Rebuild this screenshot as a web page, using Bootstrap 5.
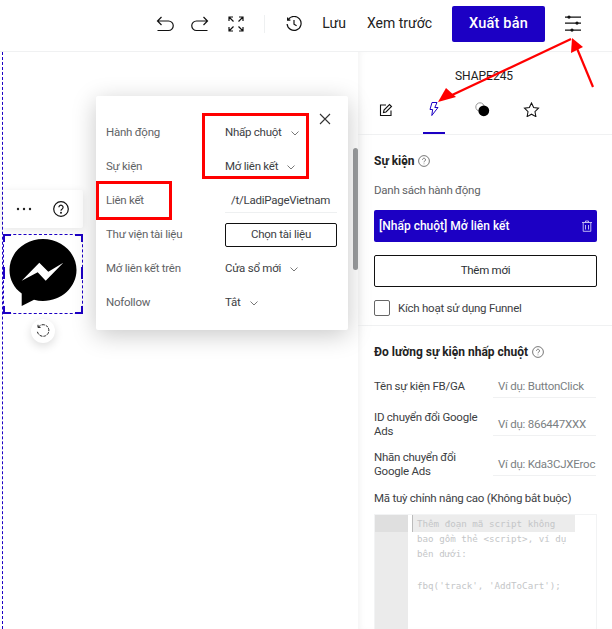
<!DOCTYPE html>
<html lang="en">
<head>
<meta charset="UTF-8">
<title>LadiPage</title>
<link href="https://cdn.jsdelivr.net/npm/bootstrap@5.3.0/dist/css/bootstrap.min.css" rel="stylesheet">
<style>
    html, body { height: 629px; overflow: hidden; }
    body { font-family: Roboto, "Liberation Sans", sans-serif; font-size: 11.5px; letter-spacing: -.25px; color: #3c4043; background: #fff; position: relative; }
    .topbar { height: 52px; border-bottom: 1px solid #f0f1f2; padding: 0 30px 3px 0; letter-spacing: 0; }
    .tool-ic { display: block; color: #111; flex: none; }
    .m-redo { margin-left: 17px; }
    .m-expand { margin-left: 18px; }
    .tool-sep { width: 1px; height: 18px; background: #eef0f1; margin: 0 21px 0 19px; }
    .m-lbl { margin-left: 20px; }
    .m-preview { margin-left: 21px; }
    .tool-txt { font-size: 14px; color: #222; margin-top: -2px; }
    .publish { width: 93px; height: 36px; background: #1c00c4; color: #fff; font-size: 14.5px; font-weight: 500; border-radius: 2px; border: 0; letter-spacing: .2px; margin: 0 19px 0 20px; padding: 0; }
    .workspace { height: 577px; }
    .canvas { width: 358px; position: relative; flex: none; }
    .guide { position: absolute; left: 2px; top: 0; bottom: 0; border-left: 1px dashed #1c00c4; }
    .float-bar { position: absolute; left: 3px; top: 138px; width: 80px; height: 38px; background: #fff; border-radius: 2px; box-shadow: 0 2px 8px rgba(0,0,0,.1); padding-left: 13px; gap: 21px; }
    .selected-shape { position: absolute; left: 3px; top: 182px; width: 80px; height: 80px; border: 1px dashed #1c00c4; }
    .handle { position: absolute; width: 8px; height: 8px; border-color: #1c00c4; border-style: solid; border-width: 0; }
    .h-tl { left: -1px; top: -1px; border-top-width: 2px; border-left-width: 2px; }
    .h-tr { right: -1px; top: -1px; border-top-width: 2px; border-right-width: 2px; }
    .h-bl { left: -1px; bottom: -1px; border-bottom-width: 2px; border-left-width: 2px; }
    .h-br { right: -1px; bottom: -1px; border-bottom-width: 2px; border-right-width: 2px; }
    .h-ml { left: -1px; top: 32px; height: 12px; border-left-width: 2px; }
    .h-mr { right: -1px; top: 32px; height: 12px; border-right-width: 2px; }
    .rotate-btn { position: absolute; left: 31px; top: 267px; width: 24px; height: 24px; border-radius: 50%; background: #fff; box-shadow: 0 3px 10px rgba(0,0,0,.14); }
    .popup { position: absolute; left: 96px; top: 44px; width: 252px; height: 234px; background: #fff; border-radius: 2px; box-shadow: 0 5px 24px rgba(0,0,0,.22); padding: 20px 11px 0 10px; z-index: 3; }
    .popup-row { height: 34px; }
    .popup-lbl { width: 119px; color: #5f6366; flex: none; }
    .popup-val { color: #3c4043; white-space: nowrap; }
    .popup-val svg { margin-left: 9px; }
    .link-val { width: 112px; height: 24px; border-bottom: 1px solid #eef0f1; padding-left: 6px; line-height: 23px; }
    .doc-btn { width: 112px; height: 24px; border: 1px solid #111; border-radius: 2px; background: #fff; font-size: 11.5px; letter-spacing: -.25px; color: #3c4043; padding: 0; }
    .popup-close { position: absolute; right: 17px; top: 17px; }
    .side-scroll { position: absolute; left: 353px; top: 96px; width: 5px; height: 122px; background: #9b9d9f; border-radius: 3px; }
    .panel { width: 254px; flex: none; box-shadow: inset 5px 0 6px -3px rgba(0,0,0,.05); overflow: hidden; }
    .panel-title { font-size: 12px; letter-spacing: 0; color: #222; text-align: center; height: 46px; padding-top: 15px; margin-left: -2px; }
    .panel-tabs { height: 37px; border-bottom: 1px solid #f0f1f2; position: relative; }
    .tab-ic { position: absolute; }
    .t-edit { left: 21px; top: 5px; }
    .t-bolt { left: 71px; top: 4px; }
    .t-style { left: 117px; top: 4px; }
    .t-star { left: 165px; top: 4px; }
    .tab-line { position: absolute; left: 65px; bottom: 0; width: 22px; height: 2px; background: #1c00c4; }
    .sec-top { padding: 18px 15px 0 16px; height: 191px; border-bottom: 1px solid #f0f1f2; }
    .sec-h { font-size: 12px; letter-spacing: 0; font-weight: 700; color: #222; line-height: 16px; }
    .list-lbl { color: #5f6366; line-height: 16px; margin-top: 13px; }
    .action-bar { height: 32px; background: #1c00c4; color: #fff; border-radius: 2px; padding: 0 5px; font-size: 12px; letter-spacing: 0; font-weight: 500; margin-top: 12px; }
    .add-btn { display: block; width: 100%; height: 32px; margin-top: 13px; border: 1px solid #111; border-radius: 2px; background: #fff; color: #2b2f33; font-size: 11.5px; letter-spacing: -.25px; padding: 0; }
    .funnel-row { margin-top: 12px; gap: 8px; }
    .funnel-txt { padding-top: 1px; }
    .funnel-box { width: 16px; height: 16px; border: 1px solid #666; border-radius: 2px; flex: none; }
    .sec-bottom { padding: 18px 15px 0 16px; }
    .ev-row { height: 38px; }
    .ev-row-tall { height: 40px; }
    .ev-lbl { width: 119px; flex: none; color: #3c4043; line-height: 14px; margin-bottom: -2px; }
    .ev-lbl-one { margin-bottom: 5px; }
    .ev-val { width: 103px; height: 25px; border-bottom: 1px solid #f0f1f2; color: #7b7f83; padding: 0 6px 0 5px; white-space: nowrap; overflow: hidden; line-height: 26px; }
    .custom-lbl { line-height: 14px; margin-top: 15px; }
    .code-box { margin-top: 9px; height: 130px; border: 1px solid #f2f3f4; overflow: hidden; font-family: "DejaVu Sans Mono", monospace; font-size: 9.2px; letter-spacing: 0; color: #c4c6c8; line-height: 15.7px; }
    .code-gutter { width: 33px; background: #ebebeb; flex: none; }
    .code-active-g { height: 17px; background: #dfdfdf; }
    .code-body { position: relative; padding: 0 0 0 9px; flex: 1; white-space: pre; }
    .code-active { position: absolute; left: 4px; top: 0; width: 163px; height: 17px; line-height: 17px; background: #ececec; border-left: 1px solid #bbb; padding-left: 4px; }
    .annot { position: absolute; left: 0; top: 0; z-index: 5; pointer-events: none; }
</style>
</head>
<body>
    <div class="topbar d-flex align-items-center justify-content-end">
        <svg class="tool-ic" width="18" height="18" viewBox="0 0 18 18" fill="none" stroke="currentColor" stroke-width="1.2"><path d="M5.500 2 1.500 6 5.500 10M1.500 6h11a4.200 4.200 0 0 1 0 9.500H1.500"/></svg>
        <svg class="tool-ic m-redo" width="18" height="18" viewBox="0 0 18 18" fill="none" stroke="currentColor" stroke-width="1.2"><path d="M12.500 2 16.500 6 12.500 10M16.500 6h-11a4.200 4.200 0 0 0 0 9.500h11"/></svg>
        <svg class="tool-ic m-expand" width="18" height="18" viewBox="0 0 18 18" fill="none" stroke="currentColor" stroke-width="1.2"><path d="M2 6V2h4M2 2l4.500 4.500M12 2h4v4M16 2l-4.500 4.500M2 12v4h4M2 16l4.500-4.500M12 16h4v-4M16 16l-4.500-4.500"/></svg>
        <span class="tool-sep"></span>
        <svg class="tool-ic" width="16" height="16" viewBox="0 0 16 16" fill="none" stroke="currentColor" stroke-width="1.2"><path d="M2.200 3.600A7 7 0 1 1 1.100 8M1.600 1.400v2.800h2.800M8 4v4.200l2.600 1.600"/></svg>
        <span class="tool-txt m-lbl">Lưu</span>
        <span class="tool-txt m-preview">Xem trước</span>
        <button class="publish" type="button">Xuất bản</button>
        <svg class="tool-ic" width="18" height="18" viewBox="0 0 18 18" fill="#111"><path d="M1 1.500h16v1.200H1zM1 7.500h16v1.200H1zM1 14.500h16v1.200H1z"/><circle cx="5" cy="2.100" r="1.600"/><circle cx="13" cy="8.100" r="1.600"/><circle cx="8" cy="15.100" r="1.600"/></svg>
    </div>

    <div class="workspace d-flex">
        <div class="canvas">
            <div class="guide"></div>
            <div class="float-bar d-flex align-items-center">
                <svg width="16" height="4" viewBox="0 0 16 4" fill="#222"><circle cx="2" cy="2" r="1.200"/><circle cx="8" cy="2" r="1.200"/><circle cx="14" cy="2" r="1.200"/></svg>
                <svg width="16" height="16" viewBox="0 0 16 16" fill="none" stroke="#111" stroke-width="1.200"><circle cx="8" cy="8" r="7.300"/><path d="M5.900 6.300a2.100 2.100 0 1 1 3.300 1.700c-.8.500-1.200 1-1.200 1.800"/><circle cx="8" cy="11.700" r=".4" fill="#111"/></svg>
            </div>
            <div class="selected-shape">
                <span class="handle h-tl"></span><span class="handle h-tr"></span><span class="handle h-bl"></span><span class="handle h-br"></span><span class="handle h-ml"></span><span class="handle h-mr"></span>
                <svg class="d-block" width="78" height="78" viewBox="0 0 78 78"><path d="M39 4C20.500 4 5.500 17.900 5.500 35c0 9.700 4.600 18 12.200 23.600V71L30 64.800c2.800.8 5.900 1.200 9 1.200 18.500 0 33.500-13.900 33.500-31S57.500 4 39 4z" fill="#000"/><path d="M17.700 45.700 35.300 27.700l9 9 15-9-17.600 18-8-8.400z" fill="#fff"/></svg>
            </div>
            <div class="rotate-btn d-flex align-items-center justify-content-center">
                <svg width="14" height="14" viewBox="0 0 14 14" fill="none" stroke="#222" stroke-width="1"><path d="M2.300 3.200A5.800 5.800 0 1 1 1.300 7" stroke-dasharray="3 1"/><path d="M2 .8v2.600h2.600"/></svg>
            </div>
            <div class="popup">
                <div class="popup-row d-flex align-items-center"><span class="popup-lbl">Hành động</span><span class="popup-val">Nhấp chuột<svg width="8" height="5" viewBox="0 0 8 5" fill="none" stroke="#555" stroke-width=".8"><path d="M.5.500 4 4 7.500.5"/></svg></span></div>
                <div class="popup-row d-flex align-items-center"><span class="popup-lbl">Sự kiện</span><span class="popup-val">Mở liên kết<svg width="8" height="5" viewBox="0 0 8 5" fill="none" stroke="#555" stroke-width=".8"><path d="M.5.500 4 4 7.500.5"/></svg></span></div>
                <div class="popup-row d-flex align-items-center"><span class="popup-lbl">Liên kết</span><div class="link-val popup-val">/t/LadiPageVietnam</div></div>
                <div class="popup-row d-flex align-items-center"><span class="popup-lbl">Thư viện tài liệu</span><button class="doc-btn" type="button">Chọn tài liệu</button></div>
                <div class="popup-row d-flex align-items-center"><span class="popup-lbl">Mở liên kết trên</span><span class="popup-val">Cửa sổ mới<svg width="8" height="5" viewBox="0 0 8 5" fill="none" stroke="#555" stroke-width=".8"><path d="M.5.500 4 4 7.500.5"/></svg></span></div>
                <div class="popup-row d-flex align-items-center"><span class="popup-lbl">Nofollow</span><span class="popup-val">Tắt<svg width="8" height="5" viewBox="0 0 8 5" fill="none" stroke="#555" stroke-width=".8"><path d="M.5.500 4 4 7.500.5"/></svg></span></div>
                <svg class="popup-close" width="12" height="12" viewBox="0 0 12 12" fill="none" stroke="#333" stroke-width="1.100"><path d="M1 1l10 10M11 1 1 11"/></svg>
            </div>
            <div class="side-scroll"></div>
        </div>

        <div class="panel">
            <div class="panel-title">SHAPE245</div>
            <div class="panel-tabs">
                <svg class="tab-ic t-edit" width="14" height="14" viewBox="0 0 14 14" fill="none" stroke="#111" stroke-width="1.100"><path d="M12 7.500V12.500H1.500V2H7"/><path d="M5 7l-.5 2.500L7 9l5.500-5.500-2-2z"/></svg>
                <svg class="tab-ic t-bolt" width="10" height="14" viewBox="0 0 10 14" fill="none" stroke="#1c00c4" stroke-width="1"><path d="M3 .5 1 7.500h2.600L2.800 13.500 9 5.500H5.800L8 .5z"/></svg>
                <svg class="tab-ic t-style" width="15" height="15" viewBox="0 0 15 15"><circle cx="5" cy="5" r="4.200" fill="none" stroke="#999"/><circle cx="8.800" cy="8.800" r="5.400" fill="#000"/></svg>
                <svg class="tab-ic t-star" width="17" height="15" viewBox="0 0 17 16" fill="none" stroke="#111" stroke-width="1.100"><path d="M8.500 1l2.300 4.900 5.200.7-3.800 3.700 1 5.300-4.700-2.600-4.700 2.600 1-5.300L1 6.600l5.200-.7z"/></svg>
                <span class="tab-line"></span>
            </div>
            <div class="sec-top">
                <div class="d-flex align-items-center gap-1 sec-h">Sự kiện <svg width="12" height="12" viewBox="0 0 12 12" fill="none" stroke="#555" stroke-width=".8"><circle cx="6" cy="6" r="5.400"/><path d="M4.500 4.700a1.500 1.500 0 1 1 2.300 1.300c-.5.300-.8.700-.8 1.300M6 8.600v.6"/></svg></div>
                <div class="list-lbl">Danh sách hành động</div>
                <div class="action-bar d-flex align-items-center justify-content-between">
                    <span>[Nhấp chuột] Mở liên kết</span>
                    <svg width="10" height="12" viewBox="0 0 10 12" fill="none" stroke="#cfc8f5" stroke-width=".9"><path d="M0 2.500h10M3.500 2.500V1h3v1.500M1.200 2.500v8.800h7.600V2.500M3.500 5v4.500M6.500 5v4.500"/></svg>
                </div>
                <button class="add-btn" type="button">Thêm mới</button>
                <div class="d-flex align-items-center funnel-row"><span class="funnel-box"></span><span class="funnel-txt">Kích hoạt sử dụng Funnel</span></div>
            </div>
            <div class="sec-bottom">
                <div class="d-flex align-items-center gap-1 sec-h">Đo lường sự kiện nhấp chuột <svg width="12" height="12" viewBox="0 0 12 12" fill="none" stroke="#555" stroke-width=".8"><circle cx="6" cy="6" r="5.400"/><path d="M4.500 4.700a1.500 1.500 0 1 1 2.300 1.300c-.5.300-.8.700-.8 1.300M6 8.600v.6"/></svg></div>
                <div class="ev-row d-flex align-items-end"><span class="ev-lbl ev-lbl-one">Tên sự kiện FB/GA</span><span class="ev-val">Ví dụ: ButtonClick</span></div>
                <div class="ev-row d-flex align-items-end"><span class="ev-lbl">ID chuyển đổi Google Ads</span><span class="ev-val">Ví dụ: 866447XXX</span></div>
                <div class="ev-row-tall d-flex align-items-end"><span class="ev-lbl">Nhãn chuyển đổi Google Ads</span><span class="ev-val">Ví dụ: Kda3CJXEroc</span></div>
                <div class="custom-lbl">Mã tuỳ chỉnh nâng cao (Không bắt buộc)</div>
                <div class="code-box d-flex">
                    <div class="code-gutter"><div class="code-active-g"></div></div>
                    <div class="code-body"><div class="code-active">Thêm đoạn mã script không</div>
bao gồm thẻ &lt;script&gt;, ví dụ
bên dưới:

fbq('track', 'AddToCart');</div>
                </div>
            </div>
        </div>
    </div>

    <svg class="annot" width="612" height="629" viewBox="0 0 612 629" fill="none">
        <g stroke="#f00" stroke-width="3">
            <rect x="203.500" y="114.500" width="104" height="63"/>
            <rect x="97.500" y="182.500" width="73" height="36"/>
        </g>
        <path d="M593 87 576 46" stroke="#f00" stroke-width="2.200"/>
        <path d="M572 38 583 47 571 53z" fill="#f00"/>
        <path d="M571 39 450 96" stroke="#f00" stroke-width="2.200"/>
        <path d="M438 102 446 88 456 97z" fill="#f00"/>
    </svg>
    <script src="https://cdn.jsdelivr.net/npm/bootstrap@5.3.0/dist/js/bootstrap.bundle.min.js"></script>
</body>
</html>
